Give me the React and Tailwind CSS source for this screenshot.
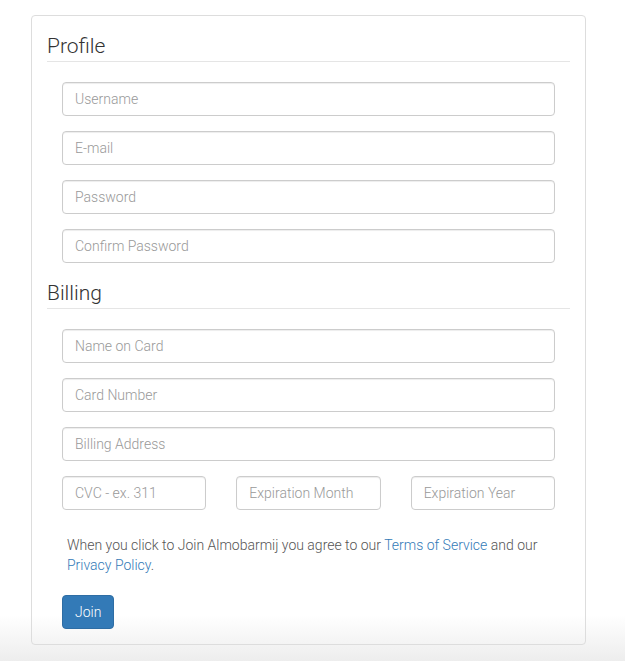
import React from "react";

const font = { fontFamily: "Roboto, 'Helvetica Neue', Arial, sans-serif" };

function Field({ placeholder }) {
  return (
    <input
      type="text"
      placeholder={placeholder}
      className="block w-full h-[34px] px-3 text-[14px] font-light text-[#555] bg-white border border-[#ccc] rounded-[4px] shadow-[inset_0_1px_1px_rgba(0,0,0,0.075)] placeholder:text-[#999] outline-none"
    />
  );
}

function Legend({ children }) {
  return (
    <div className="h-[31px] mb-5 border-b border-[#e5e5e5] text-[21px] leading-[30px] font-light text-[#333]">
      {children}
    </div>
  );
}

export default function App() {
  const profile = ["Username", "E-mail", "Password", "Confirm Password"];
  const billing = ["Name on Card", "Card Number", "Billing Address"];

  return (
    <div
      className="min-h-[661px] pt-[15px] bg-[linear-gradient(to_bottom,#ffffff_615px,#ededed_661px)]"
      style={font}
    >
      <div className="ml-[31px] w-[555px] border border-[#ddd] rounded-[4px] p-[15px]">
        <Legend>Profile</Legend>
        <div className="px-[15px]">
          {profile.map((p) => (
            <div key={p} className="mb-[15px]">
              <Field placeholder={p} />
            </div>
          ))}
        </div>

        <Legend>Billing</Legend>
        <div className="px-[15px]">
          {billing.map((p) => (
            <div key={p} className="mb-[15px]">
              <Field placeholder={p} />
            </div>
          ))}
          <div className="grid grid-cols-3 gap-[30px] mb-[15px]">
            <Field placeholder="CVC - ex. 311" />
            <Field placeholder="Expiration Month" />
            <Field placeholder="Expiration Year" />
          </div>

          <p className="mt-[25px] mb-5 px-[5px] text-[14px] leading-5 font-light text-[#555]">
            When you click to Join Almobarmij you agree to our{" "}
            <a href="#" className="text-[#337ab7]">
              Terms of Service
            </a>{" "}
            and our{" "}
            <a href="#" className="text-[#337ab7]">
              Privacy Policy
            </a>
            .
          </p>

          <button className="h-[34px] px-3 text-[14px] font-light text-white bg-[#337ab7] border border-[#2e6da4] rounded-[4px]">
            Join
          </button>
        </div>
      </div>
    </div>
  );
}
